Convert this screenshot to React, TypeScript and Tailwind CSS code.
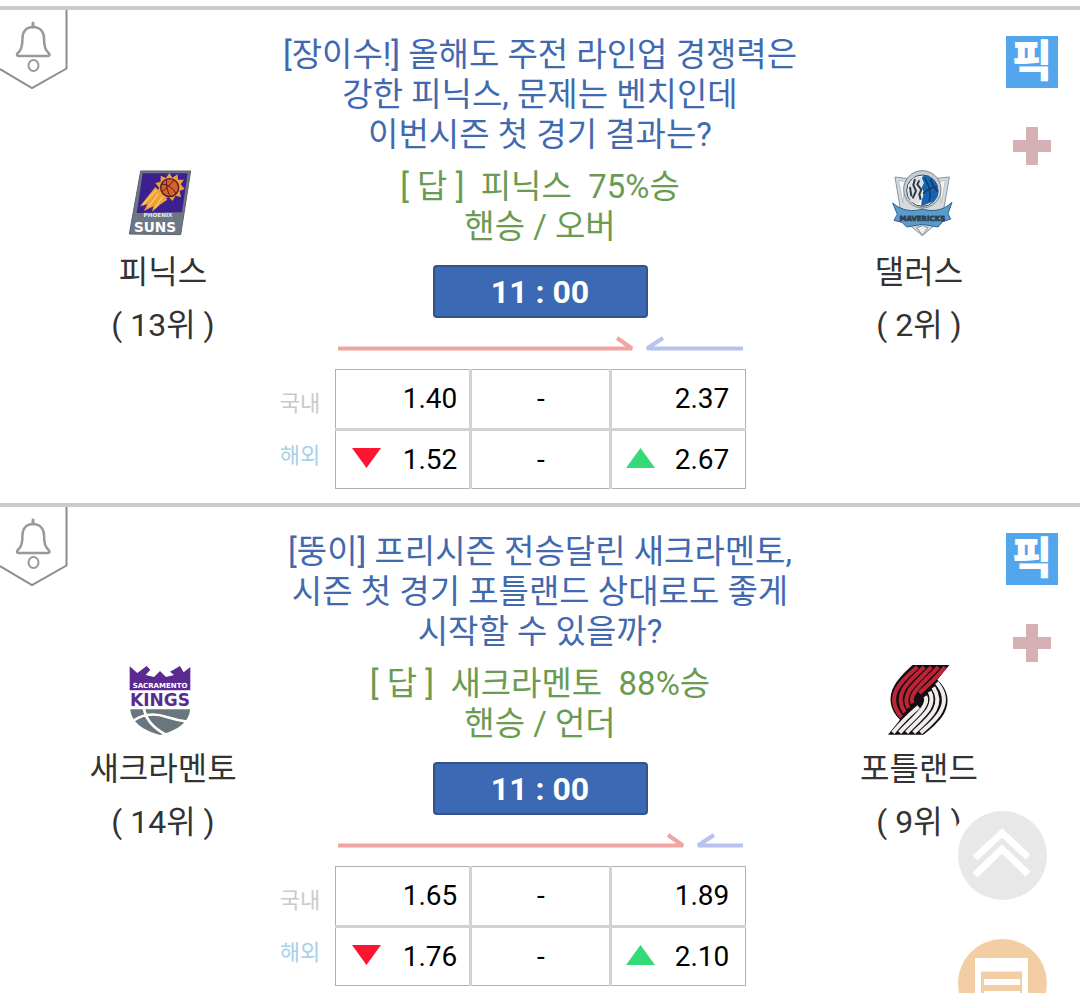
import type { ReactNode } from 'react';

type Match = {
  id: string;
  title: string[];
  answer: string[];
  time: string;
  home: { name: string; rank: string; logo: ReactNode };
  away: { name: string; rank: string; logo: ReactNode };
  homeShare: number;
  domestic: string[];
  overseas: string[];
};

function SunsLogo() {
  return (
    <svg className="w-18 h-18 font-['DejaVu_Sans',sans-serif] font-bold" viewBox="51 24 216 216" aria-hidden="true">
      <path d="M92 36H242L212 227L58 225Z" fill="#6d7784" stroke="#59636f" strokeWidth="3" strokeLinejoin="round" />
      <path d="M98 43H233L216 160L80 162Z" fill="#3d2090" />
      <path d="M136 84L90 142L112 136L102 156L130 142L126 158L152 136L172 122Z" fill="#f0a03a" />
      <path d="M140 92L98 138M146 104L116 142M158 112L134 148" stroke="#f7cf62" strokeWidth="4" />
      <path d="M178 42L187 56L203 46L204 62L222 62L212 76L224 90L209 96L213 114L196 110L188 126L176 114L160 122L157 106L138 102L148 87L136 72L152 68L152 50L168 57Z" fill="#efa23c" />
      <circle cx="179" cy="86" r="27" fill="#d8602a" stroke="#4a1d2c" strokeWidth="4" />
      <path d="M156 76C172 74 190 88 198 104M170 61C168 80 172 100 182 112M192 63C180 78 166 90 156 98" fill="none" stroke="#4a1d2c" strokeWidth="3" />
      <text x="144" y="175" textAnchor="middle" fontSize="17" fill="#e8ebef">PHOENIX</text>
      <text x="135" y="219" textAnchor="middle" fontSize="41" fill="#fff">SUNS</text>
    </svg>
  );
}

function MavericksLogo() {
  return (
    <svg className="w-18 h-18 font-['DejaVu_Sans',sans-serif] font-bold" viewBox="69 24 216 216" aria-hidden="true">
      <path d="M105 54L137 58H232L268 54L246 180L187 230L126 180Z" fill="#d5dade" stroke="#8b949b" strokeWidth="3" />
      <path d="M116 64L138 68L128 132ZM256 64L236 68L244 132Z" fill="#f4f6f7" stroke="#a8b0b6" strokeWidth="2" />
      <circle cx="187" cy="91" r="56" fill="#c9ced2" stroke="#7e878e" strokeWidth="3" />
      <circle cx="187" cy="95" r="47" fill="#fff" stroke="#3a444e" strokeWidth="3" />
      <path d="M190 48A47 47 0 0 1 222 127L184 142C182 118 196 108 188 92L178 72Z" fill="#1763ad" />
      <path d="M194 58C208 78 214 98 208 126M212 60C216 80 228 92 233 98M188 104C204 90 222 82 230 84" fill="none" stroke="#123763" strokeWidth="4" />
      <path d="M160 56L184 53L192 72L184 88L188 112L176 136L152 128L144 104L146 78Z" fill="#dde1e5" />
      <path d="M165 60L160 78L168 96L158 118M178 64L172 76L184 92L178 106L182 122M150 84L154 112" fill="none" stroke="#2d3946" strokeWidth="6" />
      <path d="M98 132C128 158 160 158 187 150C214 158 246 158 276 130L264 164L272 180L248 188L234 204L187 196L140 204L126 190L102 184L112 166Z" fill="#5b9bcc" stroke="#2e628e" strokeWidth="3" strokeLinejoin="round" />
      <path d="M170 206L187 228L204 206L187 200Z" fill="#edf0f2" stroke="#8b949b" strokeWidth="3" />
      <text x="187" y="187" textAnchor="middle" fontSize="21" fill="#2f3e4c" stroke="#2f3e4c" strokeWidth="2">MAVERICKS</text>
    </svg>
  );
}

function KingsLogo() {
  return (
    <svg className="w-18 h-18 font-['DejaVu_Sans',sans-serif] font-bold" viewBox="81 45 216 216" aria-hidden="true">
      <path d="M89 52L112 72L140 51L151 62L137 78L162 84L180 66L198 84L222 78L210 68L240 51L251 70L271 54V124H89Z" fill="#5b2a91" />
      <path d="M132 66L112 88M232 66L250 88" stroke="#5b2a91" strokeWidth="5" />
      <text x="180" y="118" textAnchor="middle" fontSize="21" fill="#fff">SACRAMENTO</text>
      <text x="180" y="172" textAnchor="middle" fontSize="51" fill="#5b2a91">KINGS</text>
      <path d="M91 181H270C268 220 232 244 180 258C128 244 94 220 91 181Z" fill="#69767e" />
      <path d="M92 222C120 196 160 190 200 204C226 212 246 216 262 218M132 180C138 214 166 240 196 256" fill="none" stroke="#fff" strokeWidth="8" />
    </svg>
  );
}

function BlazersLogo() {
  return (
    <svg className="w-18 h-18" viewBox="69 45 216 216" aria-hidden="true">
      <path d="M268 48H158C142 62 118 84 104 108C82 144 90 184 120 212L84 257H190C210 242 238 218 252 194C272 158 264 122 232 92Z" fill="#160d10" />
      <g fill="none" strokeWidth="12">
        <g stroke="#bd2537">
          <path d="M172 54C150 73 124 94 112 118C94 150 102 178 124 204" />
          <path d="M193 54C170 76 142 99 130 122C116 148 120 168 134 190" />
          <path d="M214 54C192 78 162 103 148 125C136 146 136 160 145 177" />
          <path d="M235 54C210 82 180 106 165 128C154 144 153 154 158 163" />
          <path d="M255 54C234 80 206 108 178 132" />
        </g>
        <g stroke="#eeeeee" transform="rotate(180 177 152.500)">
          <path d="M172 54C150 73 124 94 112 118C94 150 102 178 124 204" />
          <path d="M193 54C170 76 142 99 130 122C116 148 120 168 134 190" />
          <path d="M214 54C192 78 162 103 148 125C136 146 136 160 145 177" />
          <path d="M235 54C210 82 180 106 165 128C154 144 153 154 158 163" />
          <path d="M255 54C234 80 206 108 178 132" />
        </g>
      </g>
      <circle cx="177" cy="152" r="11" fill="#160d10" />
    </svg>
  );
}

const matches: Match[] = [
  {
    id: 'phx-dal',
    title: ['[장이수!] 올해도 주전 라인업 경쟁력은', '강한 피닉스, 문제는 벤치인데', '이번시즌 첫 경기 결과는?'],
    answer: ['[ 답 ]  피닉스  75%승', '핸승 / 오버'],
    time: '11 : 00',
    home: { name: '피닉스', rank: '( 13위 )', logo: <SunsLogo /> },
    away: { name: '댈러스', rank: '( 2위 )', logo: <MavericksLogo /> },
    homeShare: 297,
    domestic: ['1.40', '-', '2.37'],
    overseas: ['1.52', '-', '2.67'],
  },
  {
    id: 'sac-por',
    title: ['[뚱이] 프리시즌 전승달린 새크라멘토,', '시즌 첫 경기 포틀랜드 상대로도 좋게', '시작할 수 있을까?'],
    answer: ['[ 답 ]  새크라멘토  88%승', '핸승 / 언더'],
    time: '11 : 00',
    home: { name: '새크라멘토', rank: '( 14위 )', logo: <KingsLogo /> },
    away: { name: '포틀랜드', rank: '( 9위 )', logo: <BlazersLogo /> },
    homeShare: 348,
    domestic: ['1.65', '-', '1.89'],
    overseas: ['1.76', '-', '2.10'],
  },
];

function Team({ name, rank, logo }: Match['home']) {
  return (
    <div className="flex flex-col items-center pt-[157px] text-[32px] leading-[53px] text-[#333] whitespace-nowrap">
      {logo}
      <div className="mt-[7px]">{name}</div>
      <div>{rank}</div>
    </div>
  );
}

function AlarmButton() {
  return (
    <button type="button" aria-label="알림" className="self-start justify-self-start">
      <svg className="w-[68px] h-20" viewBox="0 0 68 80" fill="none" stroke="#999" strokeWidth="2" aria-hidden="true">
        <path d="M66.500 0V58.500L32 78L0 59" stroke="#8c8c8c" strokeWidth="2" />
        <path d="M33 13V17" strokeWidth="3" strokeLinecap="round" />
        <path d="M33 17C26 17 22.500 22 22.500 28C22.500 37 21 40 17.500 43.500C16.500 45 17 46 18.500 46H48C49.500 46 50 45 49 43.500C45.500 40 44 37 44 28C44 22 40 17 33 17Z" strokeWidth="2.500" />
        <ellipse cx="33.500" cy="55.500" rx="5" ry="5.500" />
      </svg>
    </button>
  );
}

function TrendArrows({ homeShare }: { homeShare: number }) {
  const start = homeShare + 10;
  return (
    <svg className="mt-4 w-[406px] h-[19px]" viewBox="0 0 406 19" fill="none" strokeWidth="4" strokeLinejoin="bevel" aria-hidden="true">
      <path d={`M${homeShare - 17} 4L${homeShare - 2} 14.500H1`} stroke="#f2a4a3" />
      <path d={`M${start + 19} 4L${start + 3} 14.500H406`} stroke="#b9c1ee" />
    </svg>
  );
}

function OddsTable({ domestic, overseas }: { domestic: string[]; overseas: string[] }) {
  return (
    <table className="mt-4 mr-[54px] w-[466px] table-fixed border-collapse text-[28px] text-black">
      <colgroup>
        <col className="w-[56px]" />
        <col className="w-[135px]" />
        <col className="w-[140px]" />
        <col className="w-[135px]" />
      </colgroup>
      <tbody>
        <tr className="h-[60px]">
          <th scope="row" className="pt-2 text-left text-[22px] font-normal text-[#cacaca]">국내</th>
          <td className="border border-b-[3px] border-r-[3px] border-[#d2d2d2] border-t-[#b0b0b0] border-l-[#b0b0b0] pr-3 text-right">{domestic[0]}</td>
          <td className="border border-b-[3px] border-[#d2d2d2] border-t-[#b0b0b0] text-center">{domestic[1]}</td>
          <td className="border border-b-[3px] border-l-[3px] border-[#d2d2d2] border-t-[#b0b0b0] border-r-[#b0b0b0] pr-4 text-right">{domestic[2]}</td>
        </tr>
        <tr className="h-[59px]">
          <th scope="row" className="pb-2 text-left text-[22px] font-normal text-[#a6d0ec]">해외</th>
          <td className="border border-r-[3px] border-[#d2d2d2] border-b-[#b0b0b0] border-l-[#b0b0b0] pr-3 pl-4">
            <div className="flex items-center justify-between">
              <svg className="mb-1 w-[29px] h-5" viewBox="0 0 29 20" aria-label="하락"><path d="M0 0H29L14.500 20Z" fill="#fb1530" /></svg>
              {overseas[0]}
            </div>
          </td>
          <td className="border border-[#d2d2d2] border-b-[#b0b0b0] text-center">{overseas[1]}</td>
          <td className="border border-l-[3px] border-[#d2d2d2] border-b-[#b0b0b0] border-r-[#b0b0b0] pr-4 pl-3.5">
            <div className="flex items-center justify-between">
              <svg className="mb-1 w-[29px] h-5" viewBox="0 0 29 20" aria-label="상승"><path d="M0 20H29L14.500 0Z" fill="#35da78" /></svg>
              {overseas[2]}
            </div>
          </td>
        </tr>
      </tbody>
    </table>
  );
}

function MatchCard({ match }: { match: Match }) {
  return (
    <article className="grid grid-cols-[96px_minmax(0,1fr)_620px_minmax(0,1fr)_96px] h-[497px] border-t-4 border-[#cbcbcb]">
      <AlarmButton />
      <Team {...match.home} />

      <div className="flex flex-col items-center pt-[25px]">
        <h2 className="text-center text-[33px] leading-10 text-[#4169af]">
          {match.title.map((line) => (
            <span key={line} className="block whitespace-nowrap">{line}</span>
          ))}
        </h2>
        <p className="mt-3 text-center text-[33px] leading-10 text-[#6b9b52]">
          {match.answer.map((line) => (
            <span key={line} className="block whitespace-pre">{line}</span>
          ))}
        </p>
        <button type="button" className="mt-[18px] w-[215px] h-[53px] rounded border-2 border-[#31528c] bg-[#3c69b4] text-[32px] leading-10 font-bold text-white">
          {match.time}
        </button>
        <TrendArrows homeShare={match.homeShare} />
        <OddsTable domestic={match.domestic} overseas={match.overseas} />
      </div>

      <div className="pl-1">
        <Team {...match.away} />
      </div>

      <div className="flex flex-col items-center pt-[26px]">
        <button type="button" className="w-[52px] h-[52px] bg-[#53a6ee] text-[44px] leading-[50px] font-black text-white">픽</button>
        <button type="button" aria-label="추가" className="mt-[39px]">
          <svg className="w-[38px] h-[38px]" viewBox="0 0 38 38" aria-hidden="true">
            <path d="M13 0H25V13H38V25H25V38H13V25H0V13H13Z" fill="#d5b0b4" />
          </svg>
        </button>
      </div>
    </article>
  );
}

export default function App() {
  return (
    <main className="h-screen overflow-hidden bg-white pt-1.5 font-[Roboto,'Noto_Sans_CJK_KR',sans-serif]">
      {matches.map((match) => (
        <MatchCard key={match.id} match={match} />
      ))}

      {/* Floating actions */}
      <div className="fixed right-[33px] -bottom-[35px] flex flex-col gap-[39px]">
        <button type="button" aria-label="맨 위로" className="w-[89px] h-[89px] rounded-full bg-[#e8e8e8] ring-10 ring-white">
          <svg viewBox="0 0 89 89" fill="none" stroke="#fff" strokeWidth="7" aria-hidden="true">
            <path d="M17 47L44 22L70 46M17 64L44 38L70 63" />
          </svg>
        </button>
        <button type="button" aria-label="글쓰기" className="w-[89px] h-[89px] rounded-full bg-[#f3cea5]">
          <svg viewBox="0 0 89 89" fill="none" stroke="#fff" aria-hidden="true">
            <path d="M20 22H67V66H20Z" strokeWidth="6" />
            <path d="M17 26H70" strokeWidth="13" />
            <path d="M26 43H62M26 55H62" strokeWidth="6" />
          </svg>
        </button>
      </div>
    </main>
  );
}
